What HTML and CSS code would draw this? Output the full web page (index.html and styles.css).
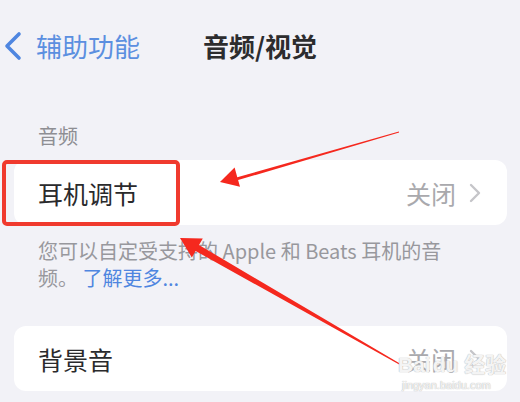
FILE: index.html
```html
<!DOCTYPE html>
<html lang="zh-CN">

<head>
    <meta charset="UTF-8">
    <meta name="viewport" content="width=device-width, initial-scale=1.0">
    <title>音频/视觉</title>
    <link rel="stylesheet" href="styles.css">
</head>

<body>
    <div class="page">
        <!-- Navigation bar -->
        <div class="navbar">
            <div class="back">
                <svg class="backIcon" width="20" height="30" viewBox="0 0 20 30">
                    <polyline points="16,3 4,15 16,27" fill="none" stroke="#4f86e0" stroke-width="3.6" stroke-linecap="round" stroke-linejoin="round" />
                </svg>
                <span class="backText">辅助功能</span>
            </div>
            <div class="title">音频/视觉</div>
            <div></div>
        </div>

        <!-- Audio section -->
        <div class="sectionHeader">音频</div>
        <div class="card">
            <div class="row">
                <span class="rowLabel">耳机调节</span>
                <span class="rowValue">关闭</span>
                <svg class="chevron" width="14" height="20" viewBox="0 0 14 20">
                    <polyline points="3,2 11,10 3,18" fill="none" stroke="#c5c5c9" stroke-width="2.4" stroke-linecap="round" stroke-linejoin="round" />
                </svg>
            </div>
        </div>
        <div class="sectionFooter">您可以自定受支持的 Apple 和 Beats 耳机的音频。 <span class="link">了解更多...</span></div>

        <div class="card cardSpaced">
            <div class="row">
                <span class="rowLabel">背景音</span>
                <span class="rowValue">关闭</span>
                <svg class="chevron" width="14" height="20" viewBox="0 0 14 20">
                    <polyline points="3,2 11,10 3,18" fill="none" stroke="#c5c5c9" stroke-width="2.4" stroke-linecap="round" stroke-linejoin="round" />
                </svg>
            </div>
        </div>
        <div class="sectionFooter">背景音可以掩盖不需要的环境噪音。</div>
    </div>

    <!-- Annotations drawn over the screenshot -->
    <div class="highlight"></div>
    <svg class="arrows" width="520" height="402" viewBox="0 0 520 402">
        <polygon points="220,182 234.6,167.6 237.3,177.2 398.9,131.5 399.1,132.5 238.1,180.1 240,186.8" fill="#f5281e" />
        <polygon points="180,238 202.8,238.5 199,245 403.25,365.6 402.75,366.4 195.6,251 191.8,257.5" fill="#f5281e" />
    </svg>
    <div class="watermark">
        <div class="wmLogo">Bai<span class="wmDu">du</span> 经验</div>
        <div class="wmUrl">jingyan.baidu.com</div>
    </div>
</body>

</html>
```

FILE: styles.css
```css
body {
    margin: 0;
    padding: 0;
    background-color: #f2f2f7;
    font-family: "Noto Sans CJK SC", "Noto Sans", sans-serif;
    width: 520px;
    height: 402px;
    overflow: hidden;
    position: relative;
}

.page {
    padding-top: 24px;
}

/* Navigation bar */
.navbar {
    display: grid;
    grid-template-columns: 1fr auto 1fr;
    align-items: center;
    height: 44px;
}
.back {
    display: flex;
    align-items: center;
    padding-left: 3px;
}
.backIcon {
    display: block;
}
.backText {
    margin-left: 13px;
    font-size: 26px;
    line-height: 34px;
    color: #5b8fe0;
}
.title {
    font-size: 26px;
    line-height: 34px;
    font-weight: 700;
    color: #2c2c2e;
}

/* Sections */
.sectionHeader {
    margin-top: 56px;
    padding-left: 38px;
    font-size: 20px;
    line-height: 24px;
    color: #8e8e93;
}
.card {
    margin: 12px 13px 0 14px;
    background-color: #fff;
    border-radius: 12px;
}
.cardSpaced {
    margin-top: 35px;
}
.row {
    display: flex;
    align-items: center;
    height: 65px;
    padding: 0 25px 0 24px;
}
.rowLabel {
    flex: 1;
    font-size: 25px;
    color: #2a2a2c;
}
.rowValue {
    font-size: 25px;
    color: #a9a9ad;
    margin-right: 12px;
}
.chevron {
    display: block;
}
.sectionFooter {
    margin-top: 12px;
    padding: 0 60px 0 38px;
    font-size: 20px;
    line-height: 27px;
    color: #98989d;
}
.link {
    color: #4f86e0;
}

/* Annotations */
.highlight {
    position: absolute;
    left: 2px;
    top: 160px;
    width: 170px;
    height: 58px;
    border: 4px solid #f03a2e;
    border-radius: 5px;
}
.arrows {
    position: absolute;
    left: 0;
    top: 0;
    pointer-events: none;
}
.watermark {
    position: absolute;
    left: 398px;
    top: 352px;
    color: rgba(255, 255, 255, 0.85);
    text-shadow: 0 0 1px #bdbdbd, 0 0 1px #bdbdbd;
    font-family: "Liberation Sans", "Noto Sans CJK SC", sans-serif;
}
.wmLogo {
    font-size: 21px;
    line-height: 26px;
    font-weight: 700;
}
.wmDu {
    margin-left: 2px;
}
.wmUrl {
    font-size: 11px;
    line-height: 14px;
    margin-left: 4px;
}
```
